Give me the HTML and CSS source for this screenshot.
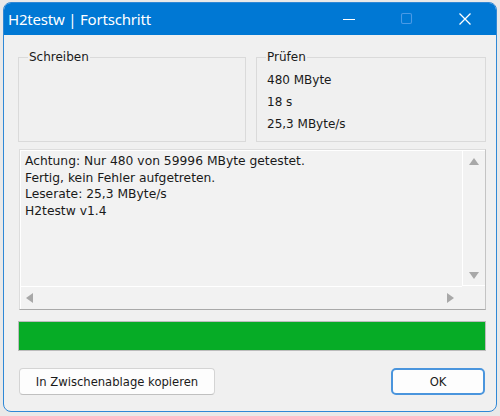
FILE: index.html
```html
<!DOCTYPE html>
<html lang="de">
<head>
<meta charset="utf-8">
<title>H2testw | Fortschritt</title>
<link rel="stylesheet" href="styles.css">
</head>
<body>
<div class="window">
  <div class="titlebar">
    <span class="title">H2testw | Fortschritt</span>
    <span class="ctl ctl-min"><svg width="14" height="14" viewBox="0 0 14 14"><path d="M1 7.5h12" stroke="#fff" stroke-width="1.2"/></svg></span>
    <span class="ctl ctl-max"><svg width="14" height="14" viewBox="0 0 14 14"><rect x="1.5" y="1.5" width="10" height="10" rx="1.5" fill="none" stroke="#4a9ae6" stroke-width="1.1"/></svg></span>
    <span class="ctl ctl-close"><svg width="14" height="14" viewBox="0 0 14 14"><path d="M1.5 1.5l11 11M12.5 1.5l-11 11" stroke="#fff" stroke-width="1.3"/></svg></span>
  </div>
  <div class="content">
    <div class="groups">
      <fieldset class="group">
        <legend>Schreiben</legend>
      </fieldset>
      <fieldset class="group">
        <legend>Prüfen</legend>
        <div class="val">480 MByte</div>
        <div class="val">18 s</div>
        <div class="val">25,3 MByte/s</div>
      </fieldset>
    </div>
    <div class="log">
      <div class="log-text">
        <div>Achtung: Nur 480 von 59996 MByte getestet.</div>
        <div>Fertig, kein Fehler aufgetreten.</div>
        <div>Leserate: 25,3 MByte/s</div>
        <div>H2testw v1.4</div>
      </div>
      <div class="vscroll">
        <span class="arr arr-up"></span>
        <span class="arr arr-down"></span>
      </div>
      <div class="hscroll">
        <span class="arr arr-left"></span>
        <span class="arr arr-right"></span>
      </div>
      <div class="corner"></div>
    </div>
    <div class="progress"><div class="fill" style="width:100%"></div></div>
    <div class="buttons">
      <button class="btn btn-copy">In Zwischenablage kopieren</button>
      <button class="btn btn-ok">OK</button>
    </div>
  </div>
</div>
</body>
</html>
```
FILE: styles.css
```css
html, body {
  margin: 0;
  padding: 0;
}
body {
  background: #e9e9e9;
  padding: 2px 3px 0 3px;
  height: 416px;
  box-sizing: border-box;
  overflow: hidden;
  font-family: "DejaVu Sans", sans-serif;
}
.window {
  width: 494px;
  height: 410px;
  box-sizing: border-box;
  border: 1px solid #2f88d6;
  border-radius: 8px;
  background: #f0f0f0;
  overflow: hidden;
  display: flex;
  flex-direction: column;
}
.titlebar {
  height: 32px;
  background: #0078d4;
  display: flex;
  align-items: center;
  color: #fff;
}
.title {
  font-family: "Noto Sans", sans-serif;
  font-size: 15px;
  padding-left: 4px;
  flex: 1;
  letter-spacing: -0.2px;
}
.ctl {
  width: 58px;
  display: flex;
  justify-content: center;
  align-items: center;
  height: 32px;
}
.ctl-close { margin-right: 2px; }
.content {
  padding: 15px 10px 0 14px;
  display: flex;
  flex-direction: column;
}
.groups {
  display: grid;
  grid-template-columns: 228px 230px;
  column-gap: 10px;
}
.group {
  margin: 0;
  border: 1px solid #dadada;
  padding: 4px 10px 5px 10px;
  height: 92px;
  box-sizing: border-box;
  font-size: 12px;
  color: #1a1a1a;
  min-width: 0;
}
.group legend {
  padding: 0 1px;
  margin-left: -1px;
  line-height: 15px;
  font-size: 12px;
}
.val {
  line-height: 22px;
  font-size: 12px;
}
.log {
  margin-top: 7px;
  margin-left: 1px;
  height: 161px;
  box-sizing: border-box;
  border: 1px solid #dddddd;
  border-right-color: #c4c4c4;
  border-bottom-color: #a9a9a9;
  box-shadow: inset 1px 1px 0 #ffffff;
  background: #f2f2f2;
  display: grid;
  grid-template-columns: 1fr 23px;
  grid-template-rows: 1fr 23px;
}
.log-text {
  padding: 3px 5px;
  font-size: 12.3px;
  line-height: 16.7px;
  color: #1a1a1a;
  white-space: nowrap;
  overflow: hidden;
}
.vscroll {
  border-left: 1px solid #ffffff;
  border-bottom: 1px solid #ffffff;
  display: flex;
  flex-direction: column;
  justify-content: space-between;
  align-items: center;
  padding: 8px 0 6px;
}
.hscroll {
  border-top: 1px solid #ffffff;
  display: flex;
  justify-content: space-between;
  align-items: center;
  padding: 0 8px 0 6px;
}
.corner {
  background: #f2f2f2;
}
.arr {
  width: 0;
  height: 0;
  display: block;
}
.arr-up {
  border-left: 5px solid transparent;
  border-right: 5px solid transparent;
  border-bottom: 7px solid #a8a8a8;
}
.arr-down {
  border-left: 5px solid transparent;
  border-right: 5px solid transparent;
  border-top: 7px solid #a8a8a8;
}
.arr-left {
  border-top: 5px solid transparent;
  border-bottom: 5px solid transparent;
  border-right: 7px solid #a8a8a8;
}
.arr-right {
  border-top: 5px solid transparent;
  border-bottom: 5px solid transparent;
  border-left: 7px solid #a8a8a8;
}
.progress {
  margin-top: 11px;
  height: 30px;
  box-sizing: border-box;
  border: 1px solid #bcbcbc;
  background: #e6e6e6;
}
.fill {
  height: 100%;
  background: #06ac26;
}
.buttons {
  margin-top: 17px;
  display: flex;
  justify-content: space-between;
  padding-left: 1px;
  padding-right: 1px;
}
.btn {
  height: 27px;
  box-sizing: border-box;
  background: #fdfdfd;
  border: 1px solid #d4d4d4;
  border-bottom-color: #c0c0c0;
  border-radius: 4px;
  font-family: "DejaVu Sans", sans-serif;
  font-size: 11.6px;
  color: #1a1a1a;
  padding: 0;
}
.btn-copy {
  width: 196px;
}
.btn-ok {
  width: 94px;
  border: 2px solid #4a95dd;
  border-radius: 5px;
}
```
